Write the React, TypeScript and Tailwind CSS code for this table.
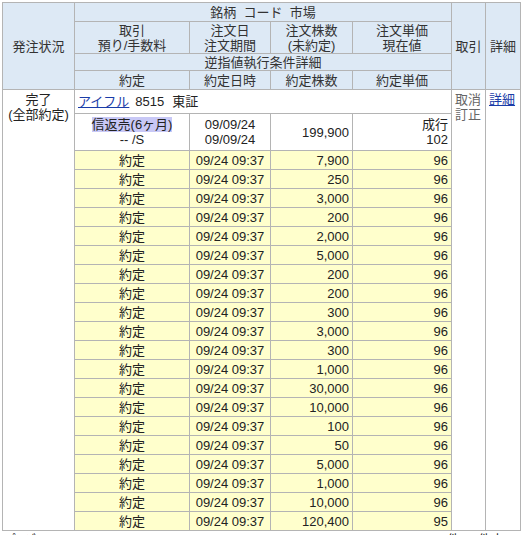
import React from "react";

const fills = [
  ["7,900", "96"],
  ["250", "96"],
  ["3,000", "96"],
  ["200", "96"],
  ["2,000", "96"],
  ["5,000", "96"],
  ["200", "96"],
  ["200", "96"],
  ["300", "96"],
  ["3,000", "96"],
  ["300", "96"],
  ["1,000", "96"],
  ["30,000", "96"],
  ["10,000", "96"],
  ["100", "96"],
  ["50", "96"],
  ["5,000", "96"],
  ["1,000", "96"],
  ["10,000", "96"],
  ["120,400", "95"],
];

const th = "border border-[#b4b4b4] bg-[#dde9f5] text-[#333] font-normal text-center align-middle px-[2px]";
const td = "border border-[#b4b4b4] px-[3px]";

export default function App() {
  return (
    <div
      className="pt-[2px] pl-[2px] bg-white text-[13px] text-[#222] leading-[15px]"
      style={{ fontFamily: '"Liberation Sans", "Noto Sans CJK JP", sans-serif' }}
    >
      <table className="table-fixed border-collapse w-[518px]">
        <colgroup>
          <col className="w-[72px]" />
          <col className="w-[115px]" />
          <col className="w-[81px]" />
          <col className="w-[82px]" />
          <col className="w-[99px]" />
          <col className="w-[34px]" />
          <col className="w-[35px]" />
        </colgroup>
        <thead>
          <tr className="h-[19px]">
            <th rowSpan={4} className={th}>発注状況</th>
            <th colSpan={4} className={th}>銘柄&nbsp;&nbsp;コード&nbsp;&nbsp;市場</th>
            <th rowSpan={4} className={th}>取引</th>
            <th rowSpan={4} className={th}>詳細</th>
          </tr>
          <tr className="h-[32px]">
            <th className={th}>取引<br />預り/手数料</th>
            <th className={th}>注文日<br />注文期間</th>
            <th className={th}>注文株数<br />(未約定)</th>
            <th className={th}>注文単価<br />現在値</th>
          </tr>
          <tr className="h-[17px]">
            <th colSpan={4} className={th}>逆指値執行条件詳細</th>
          </tr>
          <tr className="h-[19px]">
            <th className={th}>約定</th>
            <th className={th}>約定日時</th>
            <th className={th}>約定株数</th>
            <th className={th}>約定単価</th>
          </tr>
        </thead>
        <tbody>
          <tr className="h-[24px]">
            <td rowSpan={22} className={`${td} text-center align-top pt-[2px]`}>
              完了<br />(全部約定)
            </td>
            <td colSpan={4} className={`${td} align-middle`}>
              <a href="#" className="text-[#1a3ca8] underline">アイフル</a>
              <span className="ml-[6px]">8515</span>
              <span className="ml-[8px]">東証</span>
            </td>
            <td rowSpan={22} className={`${td} align-top text-[#666] pt-[2px] px-[2px]`}>
              取消<br />訂正
            </td>
            <td rowSpan={22} className={`${td} align-top pt-[2px] px-[2px]`}>
              <a href="#" className="text-[#1a3ca8] underline">詳細</a>
            </td>
          </tr>
          <tr className="h-[37px]">
            <td className={`${td} text-center align-middle`}>
              <span className="bg-[#c8c8f6]">信返売(6ヶ月)</span>
              <br />-- /S
            </td>
            <td className={`${td} text-center align-middle`}>
              09/09/24<br />09/09/24
            </td>
            <td className={`${td} text-right align-middle`}>199,900</td>
            <td className={`${td} text-right align-middle`}>
              成行<br />102
            </td>
          </tr>
          {fills.map(([qty, price], i) => (
            <tr key={i} className="h-[19px] bg-[#ffffcc]">
              <td className={`${td} text-center`}>約定</td>
              <td className={`${td} text-center`}>09/24 09:37</td>
              <td className={`${td} text-right`}>{qty}</td>
              <td className={`${td} text-right`}>{price}</td>
            </tr>
          ))}
        </tbody>
      </table>
      <div className="flex justify-between w-[518px] mt-[1px] text-[13px]">
        <span className="pl-[4px]">ﾍﾟｰｼﾞ 1</span>
        <span className="pr-[16px]">1-1件 / 1件中</span>
      </div>
    </div>
  );
}
